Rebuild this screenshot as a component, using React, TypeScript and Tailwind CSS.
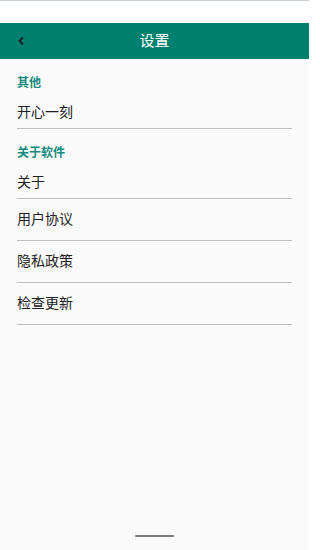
import React from "react";

const font = { fontFamily: '"Roboto", "Noto Sans CJK SC", sans-serif' };

const Section: React.FC<{ title: string; items: string[] }> = ({ title, items }) => (
  <div>
    <div className="h-[37px] pt-[17px] px-[17px] text-[12px] leading-[14px] font-bold text-[#138a7c]">
      {title}
    </div>
    {items.map((item, i) => (
      <div
        key={item}
        className={
          i === 0
            ? "mx-[17px] h-[33px] flex items-center border-b border-b-[#bdbdbd] text-[14px] text-[#212121]"
            : "mx-[17px] h-[42px] flex items-center border-b border-b-[#bdbdbd] text-[14px] text-[#212121]"
        }
      >
        {item}
      </div>
    ))}
  </div>
);

const App: React.FC = () => {
  return (
    <div className="w-[309px] h-[550px] flex flex-col bg-[#fafafa] overflow-hidden" style={font}>
      <div className="h-[23px] bg-white border-t border-t-[#c6ced2]" />
      <header className="h-[36px] bg-[#00806f] flex items-center relative">
        <button className="absolute left-[14px] w-[14px] h-[14px] flex items-center justify-center">
          <svg width="8" height="10" viewBox="0 0 8 10">
            <path d="M6 1.5 L2.5 5 L6 8.5" fill="none" stroke="#1a1a1a" strokeWidth="1.8" />
          </svg>
        </button>
        <h1 className="w-full text-center text-white text-[15px]">设置</h1>
      </header>
      <main className="flex-1">
        <Section title="其他" items={["开心一刻"]} />
        <Section title="关于软件" items={["关于", "用户协议", "隐私政策", "检查更新"]} />
      </main>
      <div className="h-[26px] flex justify-center">
        <div className="w-[39px] h-[2px] mt-[11px] rounded bg-[#7a7a7a]" />
      </div>
    </div>
  );
};

export default App;
